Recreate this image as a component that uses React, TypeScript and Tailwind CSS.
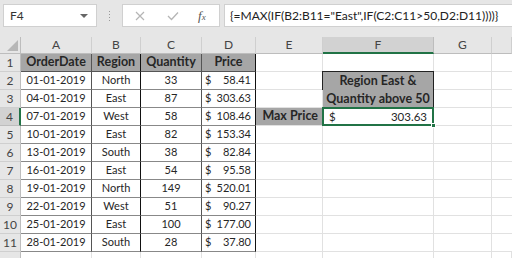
import React from "react";

const data: [string, string, string, string][] = [
  ["01-01-2019", "North", "33", "58.41"],
  ["04-01-2019", "East", "87", "303.63"],
  ["07-01-2019", "West", "58", "108.46"],
  ["10-01-2019", "East", "82", "153.34"],
  ["13-01-2019", "South", "38", "82.84"],
  ["16-01-2019", "East", "54", "95.58"],
  ["19-01-2019", "North", "149", "520.01"],
  ["22-01-2019", "West", "51", "90.27"],
  ["25-01-2019", "East", "100", "177.00"],
  ["28-01-2019", "South", "28", "37.80"],
];

const cols = ["A", "B", "C", "D", "E", "F", "G", ""];

function RowHead({ n, active }: { n?: number; active?: boolean }) {
  return (
    <div
      className={
        "flex items-center justify-center border-b text-[12px] text-[#444] " +
        (active
          ? "bg-[#d2d2d2] border-b-[#bdbdbd] border-r-2 border-r-[#217346]"
          : "bg-[#e6e6e6] border-b-[#cfcfcf] border-r border-r-[#bdbdbd]")
      }
    >
      {n}
    </div>
  );
}

export default function App() {
  return (
    <div
      className="w-[512px] h-[258px] overflow-hidden bg-white text-[#262626]"
      style={{ fontFamily: "Lato, 'Open Sans', sans-serif" }}
    >
      {/* Toolbar */}
      <div className="h-[37px] bg-[#e6e6e6] flex items-start pt-[4px]">
        <div className="ml-[3px] w-[94px] h-[23px] bg-white border border-[#d0d0d0] flex items-center pl-[6px] pr-[8px] justify-between">
          <span className="text-[12px] text-[#333]">F4</span>
          <span className="w-0 h-0 border-l-[4px] border-r-[4px] border-t-[4px] border-l-transparent border-r-transparent border-t-[#666]" />
        </div>
        <div className="w-[25px] h-[23px] flex flex-col items-center justify-center gap-[2px]">
          <span className="w-[1px] h-[1px] bg-[#999]" />
          <span className="w-[1px] h-[1px] bg-[#999]" />
          <span className="w-[1px] h-[1px] bg-[#999]" />
          <span className="w-[1px] h-[1px] bg-[#999]" />
        </div>
        <div className="w-[98px] h-[23px] bg-white border border-[#d0d0d0] flex items-center">
          <svg width="10" height="10" viewBox="0 0 10 10" className="ml-[12px]">
            <path d="M1 1 L9 9 M9 1 L1 9" stroke="#b5b5b5" strokeWidth="1.2" fill="none" />
          </svg>
          <svg width="12" height="10" viewBox="0 0 12 10" className="ml-[22px]">
            <path d="M1 5 L4.5 8.5 L11 1.5" stroke="#b5b5b5" strokeWidth="1.3" fill="none" />
          </svg>
          <span
            className="ml-[19px] text-[13px] italic text-[#555]"
            style={{ fontFamily: "'Liberation Serif', serif" }}
          >
            f<span className="text-[9px]">x</span>
          </span>
        </div>
        <div className="ml-[4px] flex-1 h-[23px] bg-white border border-[#d0d0d0] border-r-0 flex items-center pl-[5px]">
          <span className="text-[12px] text-[#222] whitespace-nowrap">
            {'{=MAX(IF(B2:B11="East",IF(C2:C11>50,D2:D11))))}'}
          </span>
        </div>
      </div>

      {/* Grid */}
      <div className="grid grid-cols-[21px_71px_49px_61px_54px_67px_111px_58px_20px] grid-rows-[17px_repeat(12,18px)]">
        {/* corner */}
        <div className="bg-[#e6e6e6] border-r border-b border-[#bdbdbd] flex items-end justify-end pr-[2px] pb-[2px]">
          <svg width="11" height="11" viewBox="0 0 11 11">
            <path d="M11 0 L11 11 L0 11 Z" fill="#b7b7b7" />
          </svg>
        </div>
        {cols.map((c, i) => (
          <div
            key={i}
            className={
              "flex items-center justify-center text-[12px] text-[#444] border-r " +
              (c === "F"
                ? "bg-[#d2d2d2] border-r-[#bdbdbd] border-b-2 border-b-[#217346]"
                : "bg-[#e6e6e6] border-r-[#cfcfcf] border-b border-b-[#bdbdbd]")
            }
          >
            {c}
          </div>
        ))}

        {/* Row 1 */}
        <RowHead n={1} />
        {["OrderDate", "Region", "Quantity", "Price"].map((h, i) => (
          <div
            key={h}
            className={
              "bg-[#a6a6a6] font-bold text-[12.5px] flex items-center justify-center border-b border-b-[#555] border-r " +
              (i === 1 || i === 3 ? "border-r-[#111]" : "border-r-[#555]")
            }
          >
            {h}
          </div>
        ))}
        <div className="border-r border-b border-[#e1e1e1]" />
        <div className="border-r border-b border-[#e1e1e1]" />
        <div className="border-r border-b border-[#e1e1e1]" />
        <div className="border-b border-[#e1e1e1]" />

        {data.map((r, idx) => {
          const row = idx + 2;
          return (
            <React.Fragment key={row}>
              <RowHead n={row} active={row === 4} />
              <div className="flex items-center justify-center text-[11px] border-r border-r-[#555] border-b border-b-[#888]">
                {r[0]}
              </div>
              <div className="flex items-center justify-center text-[11px] border-r border-r-[#111] border-b border-b-[#888]">
                {r[1]}
              </div>
              <div className="flex items-center justify-center text-[11px] border-r border-r-[#555] border-b border-b-[#888]">
                {r[2]}
              </div>
              <div className="flex items-center justify-between pl-[3px] pr-[4px] text-[11px] border-r border-r-[#111] border-b border-b-[#888]">
                <span>$</span>
                <span>{r[3]}</span>
              </div>
              {/* E */}
              {row === 4 ? (
                <div className="bg-[#a6a6a6] font-bold text-[12.5px] flex items-center justify-end pr-[4px] border-r border-r-[#111] border-b border-b-[#e1e1e1]">
                  Max Price
                </div>
              ) : (
                <div className="border-r border-b border-[#e1e1e1]" />
              )}
              {/* F */}
              {row === 2 ? (
                <div className="row-span-2 bg-[#a6a6a6] font-bold text-[12.5px] leading-[18px] flex flex-col items-center justify-center border border-[#222] -ml-px -mt-px">
                  <span>Region East &amp;</span>
                  <span>Quantity above 50</span>
                </div>
              ) : row === 3 ? null : row === 4 ? (
                <div className="relative flex items-center justify-between pl-[6px] pr-[6px] text-[11.5px] border-r border-b border-[#e1e1e1]">
                  <span>$</span>
                  <span>303.63</span>
                  <div className="absolute -left-px -top-px -right-px -bottom-px border-2 border-[#217346]" />
                  <div className="absolute -right-[3px] -bottom-[3px] w-[5px] h-[5px] bg-[#217346] border border-white" />
                </div>
              ) : (
                <div className="border-r border-b border-[#e1e1e1]" />
              )}
              <div className="border-r border-b border-[#e1e1e1]" />
              <div className="border-b border-[#e1e1e1]" />
            </React.Fragment>
          );
        })}

        {/* Row 12 (partly visible) */}
        <RowHead />
        {cols.map((_, i) => (
          <div key={i} className="border-r border-b border-[#e1e1e1]" />
        ))}
      </div>
    </div>
  );
}
